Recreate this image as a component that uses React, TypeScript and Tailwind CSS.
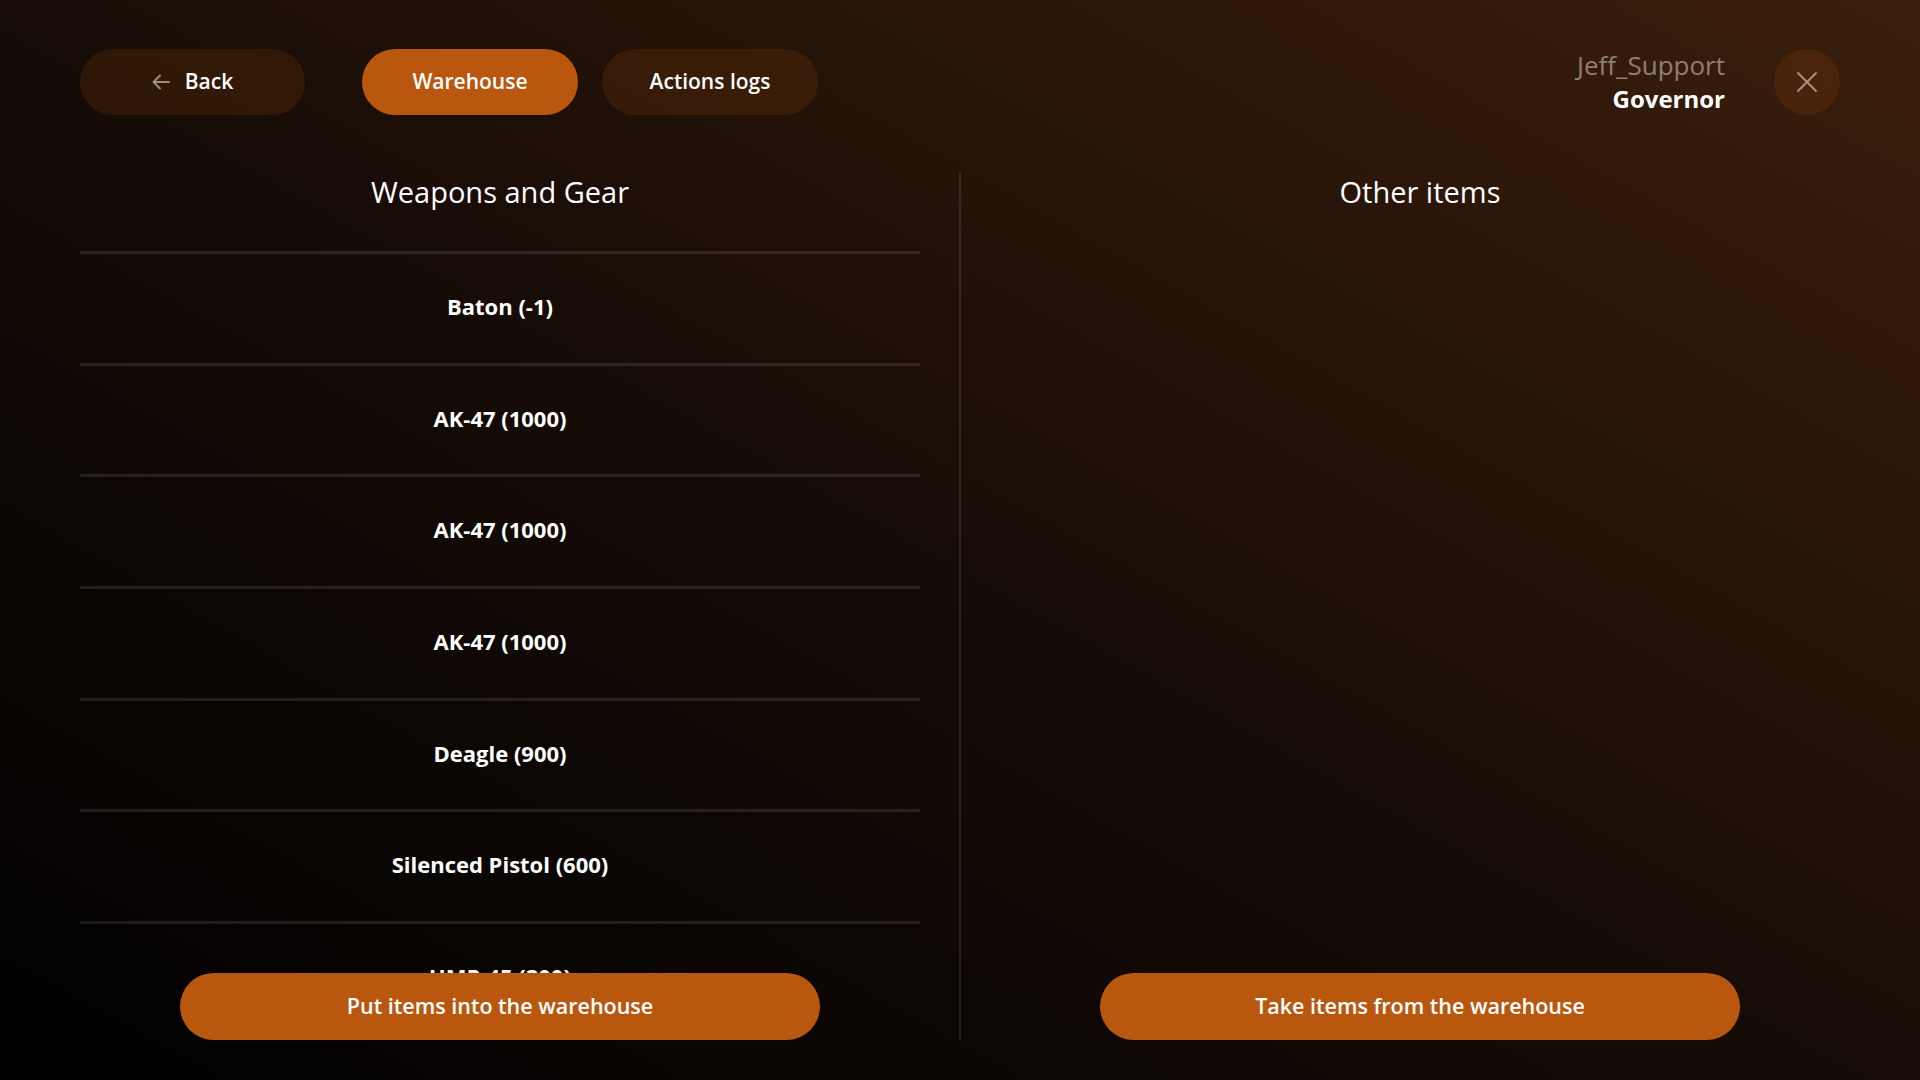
import React from 'react';

const items = [
  'Baton (-1)',
  'AK-47 (1000)',
  'AK-47 (1000)',
  'AK-47 (1000)',
  'Deagle (900)',
  'Silenced Pistol (600)',
  'UMP-45 (300)',
];

function ArrowBack() {
  return (
    <svg width="18" height="16" viewBox="0 0 18 16" fill="none" className="text-white/50">
      <path d="M17 8H2M8 1.5L1.5 8L8 14.5" stroke="currentColor" strokeWidth="2" strokeLinecap="round" strokeLinejoin="round" />
    </svg>
  );
}

function CloseIcon() {
  return (
    <svg width="22" height="22" viewBox="0 0 22 22" fill="none" className="text-white/50">
      <path d="M2 2L20 20M20 2L2 20" stroke="currentColor" strokeWidth="2" strokeLinecap="round" />
    </svg>
  );
}

export default function App() {
  return (
    <div
      className="w-full h-screen overflow-hidden flex flex-col px-20 text-white bg-[linear-gradient(to_top_right,#000000_0%,#160c06_48%,#3b1e0c_100%)]"
      style={{ fontFamily: '"Open Sans", "Noto Sans", sans-serif' }}
    >
      {/* Header */}
      <div className="flex items-center mt-[49px] h-[66px] shrink-0">
        <button className="w-[225px] h-[66px] rounded-full bg-[#b9570f]/15 flex items-center justify-center gap-[15px] text-[21px] font-semibold">
          <ArrowBack /> Back
        </button>
        <button className="ml-[57px] w-[216px] h-[66px] rounded-full bg-[#b9570f] flex items-center justify-center text-[21px] font-semibold">
          Warehouse
        </button>
        <button className="ml-[24px] w-[216px] h-[66px] rounded-full bg-[#b9570f]/15 flex items-center justify-center text-[21px] font-semibold">
          Actions logs
        </button>

        <div className="ml-auto flex flex-col items-end leading-[34px]">
          <div className="text-[26px] text-white/45">Jeff_Support</div>
          <div className="text-[24px] font-bold">Governor</div>
        </div>
        <button className="ml-[49px] w-[66px] h-[66px] rounded-full bg-[#b9570f]/15 flex items-center justify-center">
          <CloseIcon />
        </button>
      </div>

      {/* Main */}
      <div className="flex flex-1 min-h-0 mt-[57px] mb-[40px]">
        {/* Left column */}
        <div className="flex-1 relative flex flex-col min-h-0">
          <div className="text-[29px] leading-[40px] text-center mb-[39px]">Weapons and Gear</div>
          <div className="flex-1 min-h-0 overflow-hidden">
            {items.map((it, i) => (
              <div
                key={i}
                className="border-t-[3px] border-white/10 h-[111.7px] pb-[4px] flex items-center justify-center text-[22px] font-bold"
              >
                {it}
              </div>
            ))}
          </div>
          <div className="absolute bottom-0 left-0 right-0 flex justify-center">
            <button className="w-[640px] h-[67px] rounded-full bg-[#b9570f] text-[21.5px] font-semibold">
              Put items into the warehouse
            </button>
          </div>
        </div>

        <div className="w-[2px] mx-[39px] bg-white/10" />

        {/* Right column */}
        <div className="flex-1 relative flex flex-col min-h-0">
          <div className="text-[29px] leading-[40px] text-center">Other items</div>
          <div className="absolute bottom-0 left-0 right-0 flex justify-center">
            <button className="w-[640px] h-[67px] rounded-full bg-[#b9570f] text-[21.5px] font-semibold">
              Take items from the warehouse
            </button>
          </div>
        </div>
      </div>
    </div>
  );
}
